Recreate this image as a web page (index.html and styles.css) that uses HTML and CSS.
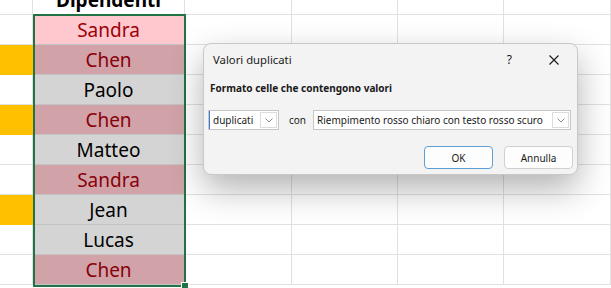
FILE: index.html
```html
<!DOCTYPE html>
<html>
  <head>
    <title>Valori duplicati</title>
    <link rel="stylesheet" href="styles.css">
  </head>
  <body>
    <div class="sheet">
      <div class="cell"></div>
      <div class="cell head">Dipendenti</div>
      <div class="cell"></div><div class="cell"></div><div class="cell"></div><div class="cell"></div>

      <div class="cell"></div>
      <div class="cell name dup active">Sandra</div>
      <div class="cell"></div><div class="cell"></div><div class="cell"></div><div class="cell"></div>

      <div class="cell mark"></div>
      <div class="cell name dup">Chen</div>
      <div class="cell"></div><div class="cell"></div><div class="cell"></div><div class="cell"></div>

      <div class="cell"></div>
      <div class="cell name">Paolo</div>
      <div class="cell"></div><div class="cell"></div><div class="cell"></div><div class="cell"></div>

      <div class="cell mark"></div>
      <div class="cell name dup">Chen</div>
      <div class="cell"></div><div class="cell"></div><div class="cell"></div><div class="cell"></div>

      <div class="cell"></div>
      <div class="cell name">Matteo</div>
      <div class="cell"></div><div class="cell"></div><div class="cell"></div><div class="cell"></div>

      <div class="cell"></div>
      <div class="cell name dup">Sandra</div>
      <div class="cell"></div><div class="cell"></div><div class="cell"></div><div class="cell"></div>

      <div class="cell mark"></div>
      <div class="cell name">Jean</div>
      <div class="cell"></div><div class="cell"></div><div class="cell"></div><div class="cell"></div>

      <div class="cell"></div>
      <div class="cell name">Lucas</div>
      <div class="cell"></div><div class="cell"></div><div class="cell"></div><div class="cell"></div>

      <div class="cell"></div>
      <div class="cell name dup">Chen</div>
      <div class="cell"></div><div class="cell"></div><div class="cell"></div><div class="cell"></div>
    </div>

    <div class="selection"><span class="fill-handle"></span></div>

    <div class="dialog">
      <div class="titlebar">
        <span class="title">Valori duplicati</span>
        <span class="help">?</span>
        <svg class="close" width="10" height="10" viewBox="0 0 10 10">
          <path d="M0.5 0.5 L9.5 9.5 M9.5 0.5 L0.5 9.5" stroke="#1a1a1a" stroke-width="1.1" fill="none"/>
        </svg>
      </div>
      <div class="heading">Formato celle che contengono valori</div>
      <div class="rule-row">
        <div class="combo combo-type">
          <span class="combo-text">duplicati</span>
          <span class="combo-arrow">
            <svg width="8" height="5" viewBox="0 0 8 5"><path d="M0.5 0.5 L4 4 L7.5 0.5" stroke="#8a8a8a" fill="none"/></svg>
          </span>
        </div>
        <span class="label">con</span>
        <div class="combo combo-format">
          <span class="combo-text">Riempimento rosso chiaro con testo rosso scuro</span>
          <span class="combo-arrow">
            <svg width="8" height="5" viewBox="0 0 8 5"><path d="M0.5 0.5 L4 4 L7.5 0.5" stroke="#8a8a8a" fill="none"/></svg>
          </span>
        </div>
      </div>
      <div class="buttons">
        <button class="btn default">OK</button>
        <button class="btn">Annulla</button>
      </div>
    </div>
  </body>
</html>
```

FILE: styles.css
```css
:root {
  --grid-line: #e1e1e1;
  --sel-line: #c4c4c4;
  --excel-green: #217346;
  --dup-fill: #ffc7ce;
  --dup-text: #9c0006;
  --sel-fill: #d4d4d4;
  --sel-dup-fill: #d1a3a9;
  --sel-dup-text: #87000a;
  --dialog-bg: #f3f3f3;
}

body {
  margin: 0;
  width: 611px;
  height: 288px;
  overflow: hidden;
  position: relative;
  background: #fff;
  font-family: "Noto Sans", "Open Sans", sans-serif;
}

/* spreadsheet */

.sheet {
  display: grid;
  grid-template-columns: 33px 152px 107px 106px 106px 107px;
  grid-auto-rows: 30px;
  margin-top: -15px;
}

.cell {
  box-sizing: border-box;
  border-right: 1px solid var(--grid-line);
  border-bottom: 1px solid var(--grid-line);
  display: flex;
  align-items: center;
  justify-content: center;
  font-size: 19px;
  color: #000;
}

.head {
  font-weight: 700;
}

.mark {
  background: #ffc000;
  border-color: #ffc000;
}

.name {
  background: var(--sel-fill);
  border-bottom-color: var(--sel-line);
}

.name.dup {
  background: var(--sel-dup-fill);
  color: var(--sel-dup-text);
}

.name.active {
  background: var(--dup-fill);
  color: var(--dup-text);
}

.selection {
  position: absolute;
  left: 33px;
  top: 14px;
  width: 153px;
  height: 273px;
  box-sizing: border-box;
  border: 2px solid var(--excel-green);
}

.fill-handle {
  position: absolute;
  right: -5px;
  bottom: -5px;
  width: 6px;
  height: 6px;
  background: var(--excel-green);
  border: 1px solid #fff;
}

/* dialog */

.dialog {
  position: absolute;
  left: 203px;
  top: 43px;
  width: 375px;
  height: 132px;
  box-sizing: border-box;
  background: var(--dialog-bg);
  border: 1px solid #c8c8c8;
  border-radius: 8px;
  box-shadow: 0 14px 34px rgba(0, 0, 0, 0.3);
  font-size: 10px;
  color: #1a1a1a;
}

.titlebar {
  height: 31px;
  display: flex;
  align-items: center;
  padding-left: 9px;
}

.title {
  font-size: 11.3px;
  flex: 1;
}

.help {
  font-size: 12px;
  margin-right: 37px;
}

.close {
  margin-right: 18px;
}

.heading {
  font-weight: 700;
  padding-left: 6px;
  margin-top: 6px;
  line-height: 14px;
}

.rule-row {
  display: flex;
  align-items: center;
  padding-left: 4px;
  margin-top: 15px;
}

.combo {
  height: 20px;
  box-sizing: border-box;
  border: 1px solid #c6c6c6;
  background: #fff;
  display: flex;
  align-items: stretch;
}

.combo-type {
  width: 71px;
}

.combo-type .combo-text {
  border-left: 1px solid #3c78d8;
}

.combo-format {
  width: 258px;
}

.combo-text {
  flex: 1;
  padding-left: 3px;
  line-height: 18px;
  white-space: nowrap;
  overflow: hidden;
}

.combo-arrow {
  width: 15px;
  margin: 1px;
  border: 1px solid #dcdcdc;
  display: flex;
  align-items: center;
  justify-content: center;
}

.label {
  margin: 0 7px 0 10px;
}

.buttons {
  display: flex;
  justify-content: flex-end;
  gap: 11px;
  padding-right: 4px;
  margin-top: 16px;
}

.btn {
  width: 69px;
  height: 23px;
  font-family: inherit;
  font-size: 10px;
  color: #1a1a1a;
  background: #fdfdfd;
  border: 1px solid #d0d0d0;
  border-radius: 4px;
  padding: 0;
}

.btn.default {
  border-color: #5e9ed6;
}
```
